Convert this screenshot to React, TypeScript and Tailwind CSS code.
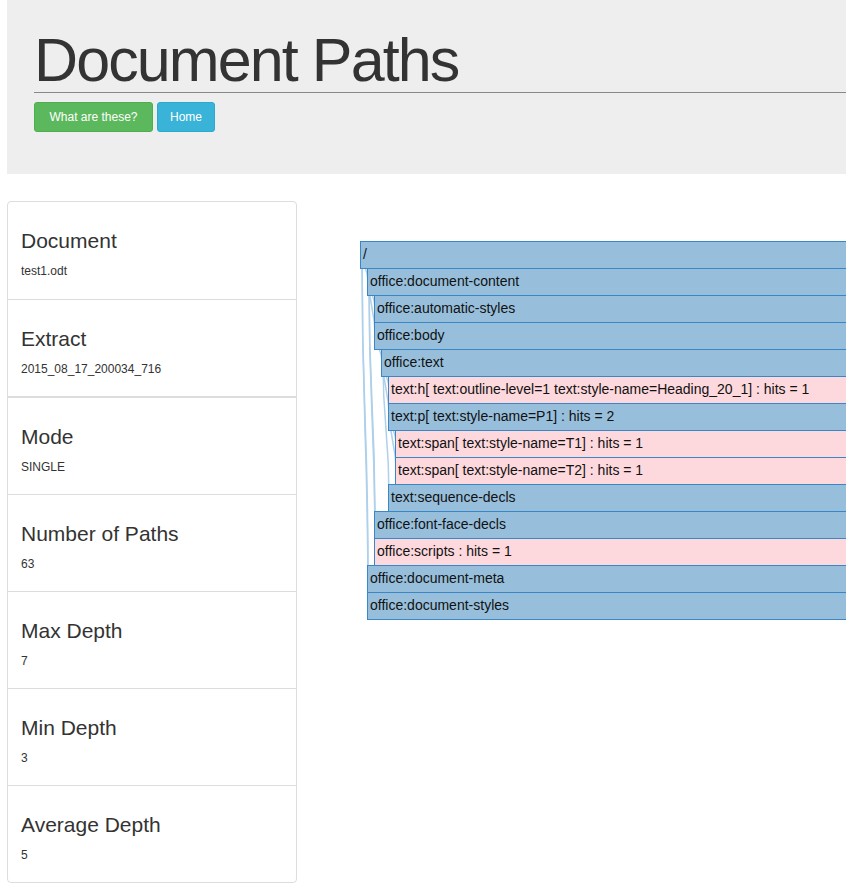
import React from "react";

type Node = { depth: number; label: string; hit?: boolean };

const nodes: Node[] = [
  { depth: 0, label: "/" },
  { depth: 1, label: "office:document-content" },
  { depth: 2, label: "office:automatic-styles" },
  { depth: 2, label: "office:body" },
  { depth: 3, label: "office:text" },
  { depth: 4, label: "text:h[ text:outline-level=1 text:style-name=Heading_20_1] : hits = 1", hit: true },
  { depth: 4, label: "text:p[ text:style-name=P1] : hits = 2" },
  { depth: 5, label: "text:span[ text:style-name=T1] : hits = 1", hit: true },
  { depth: 5, label: "text:span[ text:style-name=T2] : hits = 1", hit: true },
  { depth: 4, label: "text:sequence-decls" },
  { depth: 2, label: "office:font-face-decls" },
  { depth: 2, label: "office:scripts : hits = 1", hit: true },
  { depth: 1, label: "office:document-meta" },
  { depth: 1, label: "office:document-styles" },
];

const stats = [
  { title: "Document", value: "test1.odt" },
  { title: "Extract", value: "2015_08_17_200034_716" },
  { title: "Mode", value: "SINGLE" },
  { title: "Number of Paths", value: "63" },
  { title: "Max Depth", value: "7" },
  { title: "Min Depth", value: "3" },
  { title: "Average Depth", value: "5" },
];

const ROW = 27;
const STEP = 7;

function links() {
  // each node links back to the closest earlier node one level up
  const out: string[] = [];
  nodes.forEach((n, i) => {
    if (n.depth === 0) return;
    let p = i - 1;
    while (p >= 0 && nodes[p].depth !== n.depth - 1) p--;
    const px = nodes[p].depth * STEP + 2;
    const py = p * ROW + 13;
    const cx = n.depth * STEP + 1;
    const cy = i * ROW + 13;
    const my = (py + cy) / 2;
    out.push(`M${px},${py} C${px},${my} ${cx},${my} ${cx},${cy}`);
  });
  return out;
}

function PathTree() {
  return (
    <div className="relative mt-[40px] w-[600px]">
      <svg className="absolute left-0 top-0" width="60" height={nodes.length * ROW + 2}>
        {links().map((d, i) => (
          <path key={i} d={d} fill="none" stroke="#aed0ea" strokeWidth="1.5" />
        ))}
      </svg>
      {nodes.map((n, i) => (
        <div
          key={i}
          style={{ marginLeft: n.depth * STEP }}
          className={
            "relative h-[28px] whitespace-nowrap border border-[#3a87c8] px-[2px] text-[14px] leading-[25px] text-[#111] " +
            (i > 0 ? "-mt-px " : "") +
            (n.hit ? "bg-[#fdd8dd]" : "bg-[#97bfdc]")
          }
        >
          {n.label}
        </div>
      ))}
    </div>
  );
}

export default function App() {
  return (
    <div className="w-[846px] overflow-hidden bg-white font-['Liberation_Sans',Arial,sans-serif] text-[#333]">
      <div className="ml-[7px] bg-[#eeeeee] pb-[42px] pl-[27px] pt-[29px]">
        <h1 className="text-[61px] font-normal leading-[63px] tracking-[-1.9px] text-[#333]">
          Document Paths
        </h1>
        <div className="border-t border-[#888]" />
        <div className="mt-[9px] flex gap-[4px]">
          <button className="h-[30px] w-[119px] rounded-[3px] border border-[#4cae4c] bg-[#5cb85c] text-[12px] text-white">
            What are these?
          </button>
          <button className="h-[30px] w-[58px] rounded-[3px] border border-[#2ba9cf] bg-[#39b3d7] text-[12px] text-white">
            Home
          </button>
        </div>
      </div>

      <div className="mt-[27px] flex">
        <div className="ml-[7px] w-[290px] shrink-0 self-start rounded-[4px] border border-[#ddd]">
          {stats.map((s, i) => (
            <div
              key={s.title}
              className={
                "h-[97px] px-[13px] pt-[27px] " +
                (i === 0 ? "h-[96px] " : "border-t border-[#ddd] ") +
                (i === 2 ? "border-t-2 h-[98px]" : "")
              }
            >
              <div className="text-[21px] leading-[24px] text-[#333]">{s.title}</div>
              <div className="mt-[10px] text-[12px] leading-[16px] text-[#333]">{s.value}</div>
            </div>
          ))}
        </div>
        <div className="ml-[63px] flex-1 overflow-hidden">
          <PathTree />
        </div>
      </div>
      <div className="h-[7px]" />
    </div>
  );
}
